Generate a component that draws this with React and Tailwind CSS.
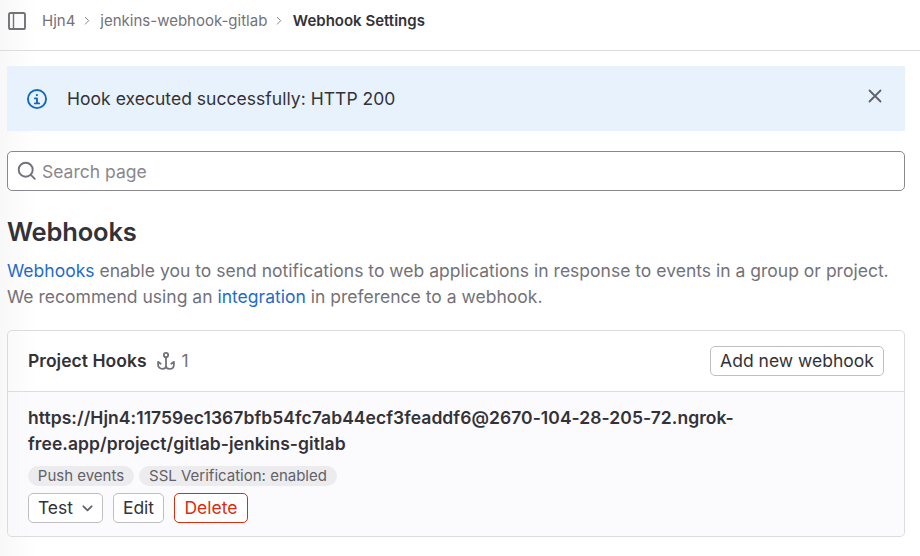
import React from "react";

function SidebarIcon() {
  return (
    <svg className="h-5 w-5 shrink-0" viewBox="0 0 20 20" fill="none" stroke="#737278" strokeWidth="1.9">
      <rect x="2" y="2" width="16" height="16" rx="1.600" />
      <path d="M6.500 2.500v15.500" strokeWidth="1.400" />
    </svg>
  );
}

function Crumb() {
  return (
    <svg className="h-[10px] w-[6px] shrink-0" viewBox="0 0 6 10" fill="none" stroke="#89888d" strokeWidth="1">
      <path d="M1 1 4.700 4.700 1 8.400" />
    </svg>
  );
}

function InfoIcon() {
  return (
    <svg className="h-5 w-5 shrink-0" viewBox="0 0 16 16" fill="#1068bf">
      <path fillRule="evenodd" d="M8 14.5a6.5 6.5 0 1 0 0-13 6.5 6.5 0 0 0 0 13ZM8 16A8 8 0 1 0 8 0a8 8 0 0 0 0 16ZM7 4.800a.9.9 0 1 1 1.800 0 .9.9 0 0 1-1.800 0ZM6.250 6.800a.7.7 0 0 0 0 1.400h1v2.600h-1a.7.7 0 0 0 0 1.400h3.500a.7.7 0 0 0 0-1.400h-1V7.500a.75.75 0 0 0-.75-.7H6.250Z" />
    </svg>
  );
}

function CloseIcon() {
  return (
    <svg className="h-[14px] w-[14px] shrink-0" viewBox="0 0 14 14" fill="none" stroke="#626168" strokeWidth="1.8" strokeLinecap="round">
      <path d="m1.5 1.5 11 11M12.500 1.500l-11 11" />
    </svg>
  );
}

function SearchIcon() {
  return (
    <svg className="h-5 w-5 shrink-0" viewBox="0 0 20 20" fill="none" stroke="#737278" strokeWidth="1.900" strokeLinecap="round">
      <circle cx="8.700" cy="8.700" r="7" />
      <path d="m13.800 13.800 4 4" />
    </svg>
  );
}

function HookIcon() {
  return (
    <svg className="h-5 w-5 shrink-0" viewBox="0 0 20 20" fill="none" stroke="#737278" strokeWidth="1.800" strokeLinecap="round" strokeLinejoin="round">
      <circle cx="10" cy="4" r="2.200" />
      <path d="M10 6.500v8.500c0 2-1.500 2.900-3.500 2.900-2.700 0-4.400-1.700-4.400-4.500v-2.600l2.600 2M10 15c0 2 1.500 2.900 3.500 2.900 2.700 0 4.400-1.700 4.400-4.500v-2.600l-2.600 2" />
    </svg>
  );
}

function Chevron() {
  return (
    <svg className="h-[7px] w-[11px] shrink-0" viewBox="0 0 11 7" fill="none" stroke="#626168" strokeWidth="1.8" strokeLinecap="round" strokeLinejoin="round">
      <path d="m1.400 1.300 4.100 4.100 4.100-4.100" />
    </svg>
  );
}

function Button({ className, children }) {
  return (
    <button className={"flex h-[30px] items-center justify-center whitespace-nowrap rounded-[5px] border bg-white text-[17.5px] leading-5 " + className}>
      {children}
    </button>
  );
}

export default function App() {
  return (
    <div className="h-[556px] w-[920px] overflow-hidden bg-linear-to-r from-[#f8f8f8] to-white to-[36px] font-['Inter','Liberation_Sans',sans-serif] text-[17.5px] text-[#333238]">
      <header className="flex h-[51px] items-center border-b border-[#dcdcde] pb-[9px] pl-[7px] text-[15px] text-[#737278]">
        <SidebarIcon />
        <nav className="ml-[15px] mt-[2px] flex items-center whitespace-nowrap">
          <span>Hjn4</span>
          <span className="mb-px ml-[9px] mr-[10px]"><Crumb /></span>
          <span>jenkins-webhook-gitlab</span>
          <span className="mb-px ml-[9px] mr-[10.5px]"><Crumb /></span>
          <span className="font-semibold text-[#333238]">Webhook Settings</span>
        </nav>
      </header>
      <main className="pl-[7px] pr-[15px] pt-[15px]">
        <div className="flex h-[65px] items-center bg-[#e7f2fc] pl-5 pr-[23px]">
          <InfoIcon />
          <span className="ml-5 mt-px flex-1 tracking-[0.03px]">Hook executed successfully: HTTP 200</span>
          <span className="mb-[5px]"><CloseIcon /></span>
        </div>
        <div className="mt-5 flex h-10 items-center rounded-[5px] border border-[#89888d] bg-white pl-[9px] text-[#89888d]">
          <SearchIcon />
          <span className="ml-[5px] mt-[2px]">Search page</span>
        </div>
        <h1 className="mt-6 text-[25.5px] font-semibold leading-[34px] tracking-[-0.15px]">Webhooks</h1>
        <p className="mt-[9px] whitespace-nowrap leading-[26px] tracking-[0.01px] text-[#737278]">
          <span className="block"><a className="text-[#1f6bcb]">Webhooks</a> enable you to send notifications to web applications in response to events in a group or project.</span>
          <span className="block">We recommend using an <a className="text-[#1f6bcb]">integration</a> in preference to a webhook.</span>
        </p>
        <section className="mt-5 h-[207px] overflow-hidden rounded-[5px] border border-[#dcdcde]">
          <div className="flex h-[61px] items-center border-b border-[#dcdcde] pl-5 pr-5">
            <h2 className="font-semibold tracking-[0.03px]">Project Hooks</h2>
            <span className="ml-[9px]"><HookIcon /></span>
            <span className="ml-[6px] flex-1 text-[#737278]">1</span>
            <Button className="w-[174px] border-[#bfbfc3]">Add new webhook</Button>
          </div>
          <div className="h-[144px] bg-[#f7f7fc]/50 pl-5 pt-[13px]">
            <div className="whitespace-nowrap font-semibold leading-[26px] tracking-[0.055px]">
              <span className="block">https://Hjn4:11759ec1367bfb54fc7ab44ecf3feaddf6@2670-104-28-205-72.ngrok-</span>
              <span className="block">free.app/project/gitlab-jenkins-gitlab</span>
            </div>
            <div className="mt-[9px] flex gap-[5px] whitespace-nowrap text-[15px] leading-5 text-[#626168]">
              <span className="w-[106px] rounded-full bg-[#ececef] text-center">Push events</span>
              <span className="w-[198px] rounded-full bg-[#ececef] text-center">SSL Verification: enabled</span>
            </div>
            <div className="mt-[7px] flex gap-[10px]">
              <Button className="w-[75px] gap-[9px] border-[#bfbfc3]">Test <Chevron /></Button>
              <Button className="w-[51px] border-[#bfbfc3]">Edit</Button>
              <Button className="w-[74px] border-[#dd2b0e] text-[#dd2b0e]">Delete</Button>
            </div>
          </div>
        </section>
      </main>
    </div>
  );
}
